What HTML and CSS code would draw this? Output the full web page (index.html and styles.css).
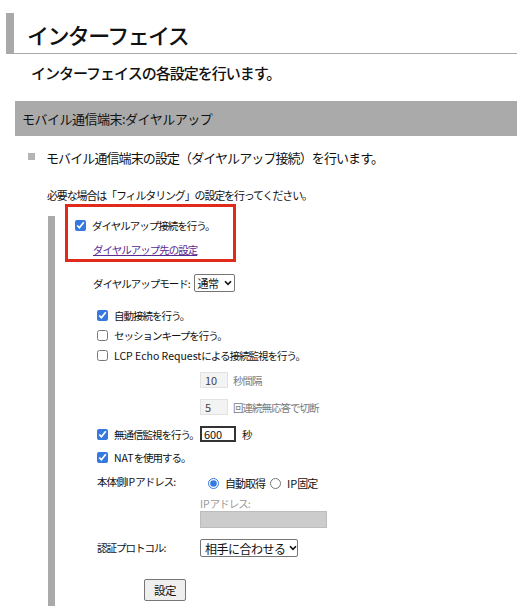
FILE: index.html
```html
<!DOCTYPE html>
<html lang="ja">
<head>
<meta charset="utf-8">
<title>インターフェイス</title>
<link rel="stylesheet" href="styles.css">
</head>
<body>
<div class="page">
  <h1 class="title">インターフェイス</h1>
  <p class="lead">インターフェイスの各設定を行います。</p>
  <div class="section-bar">モバイル通信端末:ダイヤルアップ</div>
  <p class="desc"><span class="bullet"></span>モバイル通信端末の設定（ダイヤルアップ接続）を行います。</p>
  <p class="note">必要な場合は「フィルタリング」の設定を行ってください。</p>

  <div class="panel">
    <div class="highlight"></div>
    <label class="row row-dial"><input type="checkbox" class="cb" checked>ダイヤルアップ接続を行う。</label>
    <div class="row row-link"><a href="#" class="link">ダイヤルアップ先の設定</a></div>
    <div class="row row-mode">ダイヤルアップモード:<span class="select sel-mode">通常<svg class="chev" viewBox="0 0 8 6" width="8" height="6"><path d="M1 1.2 L4 4.4 L7 1.2" fill="none" stroke="#111" stroke-width="1.6"/></svg></span></div>

    <div class="checks">
      <label class="row row-cb"><input type="checkbox" class="cb" checked>自動接続を行う。</label>
      <label class="row row-cb"><input type="checkbox" class="cb">セッションキープを行う。</label>
      <label class="row row-cb"><input type="checkbox" class="cb"><span class="lat">LCP Echo Request</span>による接続監視を行う。</label>
    </div>

    <div class="row row-num first"><span class="num-box">10</span><span class="dim">秒間隔</span></div>
    <div class="row row-num second"><span class="num-box">5</span><span class="dim">回連続無応答で切断</span></div>

    <label class="row row-idle"><input type="checkbox" class="cb" checked>無通信監視を行う。<span class="num-active">600</span><span class="unit">秒</span></label>
    <label class="row row-nat"><input type="checkbox" class="cb" checked><span class="lat">NAT</span>を使用する。</label>

    <div class="row row-ip">
      <span class="field-label">本体側<span class="lat">IP</span>アドレス:</span>
      <span class="radios">
        <label class="radio-item"><input type="radio" name="ip" class="rb" checked>自動取得</label>
        <label class="radio-item"><input type="radio" name="ip" class="rb"><span class="lat">IP</span>固定</label>
      </span>
    </div>
    <div class="ip-addr">
      <span class="ip-label"><span class="lat">IP</span>アドレス:</span>
      <span class="ip-input"></span>
    </div>

    <div class="row row-auth">
      <span class="field-label">認証プロトコル:</span>
      <span class="select sel-auth">相手に合わせる<svg class="chev" viewBox="0 0 8 6" width="8" height="6"><path d="M1 1.2 L4 4.4 L7 1.2" fill="none" stroke="#111" stroke-width="1.6"/></svg></span>
    </div>

    <div class="row row-btn"><button type="button" class="btn">設定</button></div>
  </div>
</div>
</body>
</html>
```

FILE: styles.css
```css
html, body {
  margin: 0;
  padding: 0;
  background: #fff;
}
body {
  font-family: "Noto Sans CJK JP", "Noto Sans", sans-serif;
  color: #111;
}
.page {
  padding: 13px 0 0 6px;
}
.title {
  margin: 0;
  height: 38px;
  padding-top: 2px;
  line-height: 38px;
  border-left: 8px solid #a9a9a9;
  border-bottom: 1px solid #a9a9a9;
  padding-left: 13px;
  font-size: 22px;
  font-weight: 500;
  letter-spacing: -1.6px;
}
.lead {
  margin: 9px 0 0 25px;
  font-size: 15px;
  line-height: 20px;
  letter-spacing: -1px;
  font-weight: 500;
}
.section-bar {
  margin: 18px 0 0 9px;
  height: 35px;
  line-height: 35px;
  background: #aaaaaa;
  padding-left: 7px;
  font-size: 13px;
  letter-spacing: -0.5px;
}
.desc {
  margin: 11px 0 0 22px;
  display: flex;
  align-items: center;
  height: 20px;
  font-size: 13px;
  letter-spacing: -0.9px;
}
.bullet {
  width: 7px;
  height: 7px;
  background: #b4b4b4;
  margin-right: 11px;
  margin-top: -2px;
}
.note {
  margin: 20px 0 0 41px;
  font-size: 11px;
  line-height: 16px;
  letter-spacing: -1.15px;
}
.panel {
  position: relative;
  margin: 13px 0 0 42px;
  border-left: 7px solid #aaaaaa;
  padding-bottom: 5px;
  font-size: 10.5px;
  letter-spacing: -1px;
}
.lat {
  letter-spacing: 0;
}
.highlight {
  position: absolute;
  top: -12px;
  left: 10px;
  width: 165px;
  height: 52px;
  border: 3px solid #e02b1c;
}
.row {
  display: flex;
  align-items: center;
  white-space: nowrap;
}
.cb {
  margin: 0 6px 0 0;
  width: 11px;
  height: 11px;
  accent-color: #3478e0;
  flex: none;
}
.rb {
  margin: 0 6px 0 0;
  width: 11px;
  height: 11px;
  accent-color: #3478e0;
  flex: none;
}
.row-dial {
  height: 18px;
  padding-left: 20px;
}
.row-link {
  height: 18px;
  margin-top: 6px;
  padding-left: 38px;
}
.link {
  color: #5a2a90;
  text-decoration: underline;
}
.row-mode {
  height: 18px;
  margin-top: 16px;
  padding-left: 38px;
}
.select {
  display: inline-flex;
  align-items: center;
  justify-content: space-between;
  box-sizing: border-box;
  height: 18px;
  border: 1px solid #767676;
  border-radius: 2px;
  background: #fff;
  padding: 0 3px 0 4px;
  font-size: 11.5px;
  letter-spacing: -0.5px;
  white-space: nowrap;
}
.chev {
  margin-left: 3px;
  flex: none;
}
.sel-mode {
  margin-left: 4px;
  width: 41px;
  font-size: 11px;
  padding: 0 2px 0 3px;
}
.checks {
  margin-top: 13px;
  padding-left: 42px;
}
.row-cb {
  height: 20px;
}
.row-num {
  height: 16px;
  padding-left: 145px;
}
.row-num.first {
  margin-top: 7px;
}
.row-num.second {
  margin-top: 11px;
}
.num-box {
  box-sizing: border-box;
  width: 28px;
  height: 16px;
  line-height: 14px;
  background: #f3f3f3;
  border: 1px solid #e2e2e2;
  color: #444;
  padding-left: 4px;
  font-size: 11px;
  letter-spacing: 0;
  margin-right: 5px;
}
.dim {
  color: #7a7a7a;
}
.row-idle {
  height: 18px;
  margin-top: 10px;
  padding-left: 42px;
}
.num-active {
  box-sizing: border-box;
  width: 36px;
  height: 16px;
  line-height: 12px;
  border: 2px solid #333;
  background: #fff;
  padding-left: 2px;
  font-size: 11px;
  letter-spacing: 0;
  margin: 0 6px 0 1px;
}
.unit {
  font-size: 10.5px;
}
.row-nat {
  height: 18px;
  margin-top: 5px;
  padding-left: 42px;
}
.row-ip {
  height: 18px;
  margin-top: 8px;
  padding-left: 42px;
  align-items: flex-start;
}
.field-label {
  width: 107px;
  flex: none;
  line-height: 18px;
}
.row-ip .field-label {
  line-height: 16px;
}
.radios {
  display: flex;
  align-items: center;
  height: 18px;
  padding-left: 4px;
}
.radio-item {
  display: flex;
  align-items: center;
  margin-right: 5px;
  font-size: 11px;
}
.ip-addr {
  display: flex;
  flex-direction: column;
  padding-left: 145px;
  margin-top: 5px;
}
.ip-label {
  color: #9a9a9a;
  height: 14px;
  line-height: 14px;
}
.ip-input {
  box-sizing: border-box;
  width: 127px;
  height: 17px;
  background: #cccccc;
  border: 1px solid #bcbcbc;
}
.row-auth {
  height: 18px;
  margin-top: 11px;
  padding-left: 42px;
}
.row-auth .field-label {
  width: 103px;
}
.sel-auth {
  width: 98px;
  font-size: 12px;
  letter-spacing: -0.5px;
}
.row-btn {
  margin-top: 22px;
  padding-left: 89px;
}
.btn {
  box-sizing: border-box;
  width: 42px;
  height: 22px;
  padding: 0;
  background: #efefef;
  border: 1px solid #767676;
  border-radius: 2px;
  font-family: "Noto Sans CJK JP", sans-serif;
  font-size: 11.5px;
  letter-spacing: -0.5px;
  color: #111;
}
```
